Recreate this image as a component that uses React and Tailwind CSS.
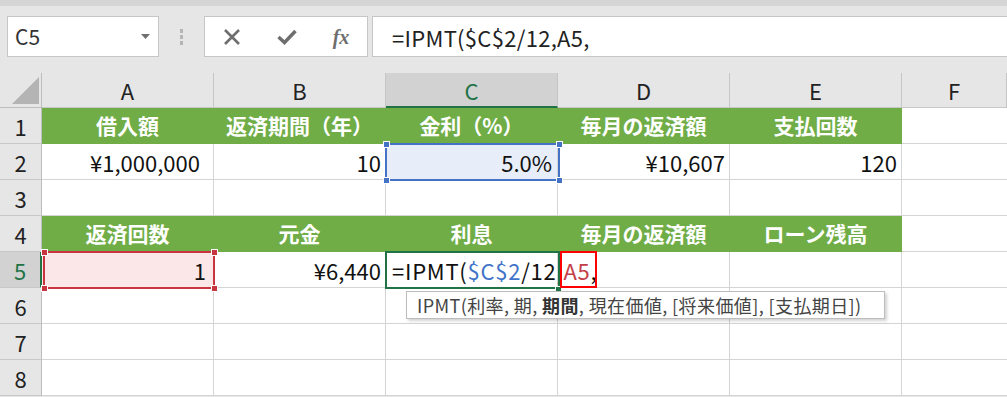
import React from 'react';

const cols = ['A', 'B', 'C', 'D', 'E', 'F'];

const headerRow1 = ['借入額', '返済期間（年）', '金利（%）', '毎月の返済額', '支払回数'];
const headerRow4 = ['返済回数', '元金', '利息', '毎月の返済額', 'ローン残高'];

function GreenRow({ labels }) {
  return (
    <>
      {labels.map((l, i) => (
        <div
          key={i}
          className="flex w-[172px] shrink-0 items-center justify-center border-r border-b border-[#70ad47] bg-[#70ad47] text-[21px] font-bold leading-none text-white"
        >
          {l}
        </div>
      ))}
      <div className="flex-1 border-b border-[#d4d4d4] bg-white" />
    </>
  );
}

function Cell({ children, className = '', bg = 'bg-white' }) {
  return (
    <div
      className={`flex w-[172px] shrink-0 items-center justify-end whitespace-nowrap border-r border-b border-[#d4d4d4] text-[22px] leading-none text-[#111] ${bg} ${className}`}
    >
      {children}
    </div>
  );
}

function Handle({ x, y, color }) {
  return (
    <div
      className="absolute z-30 h-[7px] w-[7px] border border-white"
      style={{ left: x - 3, top: y - 3, backgroundColor: color }}
    />
  );
}

export default function App() {
  const rows = [1, 2, 3, 4, 5, 6, 7, 8];
  return (
    <div className="relative h-[397px] w-[1007px] overflow-hidden bg-[#e6e6e6] font-['Noto_Sans_CJK_JP','Noto_Sans',sans-serif] text-[#222]">
      <div className="h-[6px] bg-[#d5d5d5]" />
      {/* formula bar */}
      <div className="mt-[10px] flex h-[41px] pl-[7px]">
        <div className="relative flex w-[152px] items-center border border-[#c6c6c6] bg-white pl-[7px] text-[21px] leading-none text-[#333]">
          C5
          <svg className="absolute right-[8px] top-[17px]" width="9" height="5" viewBox="0 0 9 5">
            <path d="M0 0 L9 0 L4.5 5 Z" fill="#6f6f6f" />
          </svg>
        </div>
        <div className="flex w-[45px] flex-col items-center justify-center gap-[2px]">
          <div className="h-[4px] w-[3px] bg-[#b5b5b5]" />
          <div className="h-[4px] w-[3px] bg-[#b5b5b5]" />
          <div className="h-[4px] w-[3px] bg-[#b5b5b5]" />
        </div>
        <div className="flex w-[164px] items-center border border-[#c6c6c6] bg-white">
          <div className="flex w-[54px] items-center justify-center">
            <svg width="18" height="16" viewBox="0 0 18 16">
              <path d="M2 1 L16 15 M16 1 L2 15" stroke="#6e6e6e" strokeWidth="2.6" />
            </svg>
          </div>
          <div className="flex w-[56px] items-center justify-center">
            <svg width="20" height="16" viewBox="0 0 20 16">
              <path d="M1.5 8 L7.5 13.5 L18.5 2" stroke="#6e6e6e" strokeWidth="3.4" fill="none" />
            </svg>
          </div>
          <div className="flex w-[52px] items-center justify-center">
            <span className="font-['Liberation_Serif',serif] text-[20px] font-bold italic leading-none text-[#6e6e6e]">
              fx
            </span>
          </div>
        </div>
        <div className="ml-[4px] flex flex-1 items-center border border-r-0 border-[#c6c6c6] bg-white pl-[19px] text-[22px] leading-none tracking-[0.3px] text-[#222]">
          =IPMT($C$2/12,A5,
        </div>
      </div>

      {/* grid */}
      <div className="mt-[16px]">
        <div className="flex h-[35px]">
          <div className="relative w-[42px] shrink-0 border-r border-b border-[#bdbdbd]">
            <svg className="absolute left-[12px] top-[4px]" width="27" height="27" viewBox="0 0 27 27">
              <path d="M27 0 L27 27 L0 27 Z" fill="#b4b4b4" />
            </svg>
          </div>
          {cols.map((c) =>
            c === 'C' ? (
              <div
                key={c}
                className="flex w-[172px] shrink-0 items-center justify-center border-r border-b-2 border-r-[#c6c6c6] border-b-[#217346] bg-[#d2d2d2] text-[22px] leading-none text-[#217346]"
              >
                {c}
              </div>
            ) : (
              <div
                key={c}
                className={`flex items-center justify-center border-r border-b border-[#c6c6c6] text-[22px] leading-none text-[#222] ${
                  c === 'F' ? 'flex-1' : 'w-[172px] shrink-0'
                }`}
              >
                {c}
              </div>
            )
          )}
        </div>

        {rows.map((r) => (
          <div key={r} className="flex h-[36px]">
            {r === 5 ? (
              <div className="flex w-[42px] shrink-0 items-center justify-center border-r-2 border-b border-r-[#217346] border-b-[#c8c8c8] bg-[#d2d2d2] text-[22px] leading-none text-[#217346]">
                {r}
              </div>
            ) : (
              <div className="flex w-[42px] shrink-0 items-center justify-center border-r border-b border-r-[#bdbdbd] border-b-[#c8c8c8] text-[22px] leading-none text-[#222]">
                {r}
              </div>
            )}
            {r === 1 && <GreenRow labels={headerRow1} />}
            {r === 4 && <GreenRow labels={headerRow4} />}
            {r === 2 && (
              <>
                <Cell className="pr-[13px]">¥1,000,000</Cell>
                <Cell className="pr-[4px]">10</Cell>
                <Cell bg="bg-[#e7eef9]" className="pr-[5px]">5.0%</Cell>
                <Cell className="pr-[4px]">¥10,607</Cell>
                <Cell className="pr-[4px]">120</Cell>
                <div className="flex-1 border-b border-[#d4d4d4] bg-white" />
              </>
            )}
            {r === 5 && (
              <>
                <Cell bg="bg-[#fbe7e8]" className="pr-[7px]">1</Cell>
                <Cell className="pr-[4px]">¥6,440</Cell>
                <div className="relative z-10 flex w-[172px] shrink-0 items-center overflow-visible whitespace-nowrap border-r border-b border-[#d4d4d4] bg-white pl-[6px] text-[22px] leading-none tracking-[0.75px] text-[#111]">
                  <span>=IPMT(</span>
                  <span className="text-[#3f74c8]">$C$2</span>
                  <span>/12,</span>
                  <span className="text-[#c43e48]">A5</span>
                  <span>,</span>
                </div>
                <Cell />
                <Cell />
                <div className="flex-1 border-b border-[#d4d4d4] bg-white" />
              </>
            )}
            {(r === 3 || r >= 6) && (
              <>
                <Cell />
                <Cell />
                <Cell />
                <Cell />
                <Cell />
                <div className="flex-1 border-b border-[#d4d4d4] bg-white" />
              </>
            )}
          </div>
        ))}
      </div>

      {/* C2 reference highlight */}
      <div className="absolute left-[385px] top-[143px] z-20 h-[38px] w-[175px] border-2 border-[#4472c4]" />
      <Handle x={386} y={144} color="#4472c4" />
      <Handle x={559} y={144} color="#4472c4" />
      <Handle x={386} y={180} color="#4472c4" />
      <Handle x={559} y={180} color="#4472c4" />

      {/* A5 reference highlight */}
      <div className="absolute left-[43px] top-[251px] z-20 h-[38px] w-[172px] border-2 border-[#c8353e]" />
      <Handle x={44} y={252} color="#c8353e" />
      <Handle x={214} y={252} color="#c8353e" />
      <Handle x={44} y={288} color="#c8353e" />
      <Handle x={214} y={288} color="#c8353e" />

      {/* active cell C5 */}
      <div className="absolute left-[385px] top-[251px] z-20 h-[38px] w-[175px] border-2 border-[#217346]" />
      <div className="absolute left-[555px] top-[286px] z-30 h-[7px] w-[7px] border border-white bg-[#217346]" />

      {/* annotation box */}
      <div className="absolute left-[560px] top-[251px] z-30 h-[37px] w-[37px] border-2 border-[#ff0000]" />

      {/* tooltip */}
      <div className="absolute left-[406px] top-[291px] z-40 flex h-[28px] w-[479px] items-center whitespace-pre border border-[#bdbdbd] bg-white pl-[10px] text-[18px] leading-none tracking-[0.4px] text-[#444] shadow-[2px_2px_3px_rgba(0,0,0,0.18)]">
        <span>
          {'IPMT(利率, 期, '}
          <span className="font-bold text-[#333]">期間</span>
          {', 現在価値, [将来価値], [支払期日])'}
        </span>
      </div>
    </div>
  );
}
